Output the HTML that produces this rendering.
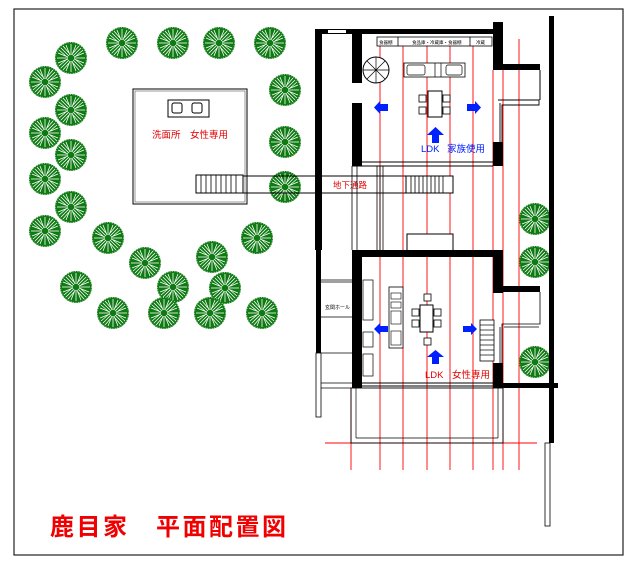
<!DOCTYPE html>
<html><head><meta charset="utf-8"><style>
html,body{margin:0;padding:0;background:#fff;}
svg{display:block;}
text{font-family:"Liberation Sans","Noto Sans CJK JP",sans-serif;}
</style></head><body>
<svg width="638" height="567" viewBox="0 0 638 567" xmlns="http://www.w3.org/2000/svg">
<defs>
<g id="tr">
<circle r="16" fill="#0e7a12"/>
<g stroke="#fff" stroke-width="0.8">
<line x1="0" y1="-3" x2="0" y2="-14"/><line x1="0" y1="3" x2="0" y2="14"/>
<line x1="-3" y1="0" x2="-14" y2="0"/><line x1="3" y1="0" x2="14" y2="0"/>
<line x1="2" y1="-2" x2="10" y2="-10"/><line x1="-2" y1="2" x2="-10" y2="10"/>
<line x1="-2" y1="-2" x2="-10" y2="-10"/><line x1="2" y1="2" x2="10" y2="10"/>
<line x1="1" y1="-3" x2="5" y2="-13"/><line x1="-1" y1="3" x2="-5" y2="13"/>
<line x1="3" y1="1" x2="13" y2="5"/><line x1="-3" y1="-1" x2="-13" y2="-5"/>
<line x1="-1" y1="-3" x2="-5" y2="-13"/><line x1="1" y1="3" x2="5" y2="13"/>
<line x1="3" y1="-1" x2="13" y2="-5"/><line x1="-3" y1="1" x2="-13" y2="5"/>
<line x1="2" y1="-5" x2="8" y2="-12"/><line x1="-2" y1="5" x2="-8" y2="12"/>
<line x1="5" y1="2" x2="12" y2="8"/><line x1="-5" y1="-2" x2="-12" y2="-8"/>
<line x1="-2" y1="-5" x2="-8" y2="-12"/><line x1="2" y1="5" x2="8" y2="12"/>
<line x1="5" y1="-2" x2="12" y2="-8"/><line x1="-5" y1="2" x2="-12" y2="8"/>
</g>
<circle r="15.5" fill="none" stroke="#fff" stroke-width="1" stroke-dasharray="0.8 1.6" opacity="0.7"/>
</g>
<g id="chair"><rect width="7" height="7" fill="#fff" stroke="#000" stroke-width="0.8"/></g>
</defs>

<rect x="14" y="9" width="609" height="546" fill="none" stroke="#222" stroke-width="1.2"/>

<g>
<use href="#tr" x="122" y="43"/><use href="#tr" x="173" y="43"/><use href="#tr" x="219" y="43"/><use href="#tr" x="270" y="43"/>
<use href="#tr" x="71" y="58"/><use href="#tr" x="45" y="82"/><use href="#tr" x="285" y="90"/>
<use href="#tr" x="71" y="110"/><use href="#tr" x="45" y="133"/><use href="#tr" x="285" y="142"/>
<use href="#tr" x="71" y="155"/><use href="#tr" x="45" y="179"/><use href="#tr" x="285" y="187"/>
<use href="#tr" x="71" y="207"/><use href="#tr" x="45" y="231"/><use href="#tr" x="108" y="238"/><use href="#tr" x="257" y="238"/>
<use href="#tr" x="145" y="263"/><use href="#tr" x="212" y="257"/><use href="#tr" x="76" y="287"/><use href="#tr" x="173" y="287"/><use href="#tr" x="225" y="288"/>
<use href="#tr" x="113" y="313"/><use href="#tr" x="164" y="313"/><use href="#tr" x="210" y="313"/><use href="#tr" x="262" y="313"/>
<use href="#tr" x="535" y="219"/><use href="#tr" x="535" y="262"/><use href="#tr" x="535" y="362"/>
</g>

<rect x="133" y="89" width="114" height="115" fill="none" stroke="#000" stroke-width="1"/>
<rect x="135" y="91" width="110" height="111" fill="none" stroke="#555" stroke-width="0.6"/>
<rect x="168" y="100" width="41" height="17" fill="none" stroke="#000"/>
<rect x="172" y="103" width="10" height="10" rx="2" fill="none" stroke="#000"/>
<rect x="192" y="103" width="10" height="10" rx="2" fill="none" stroke="#000"/>
<text x="152" y="138" font-size="9.5" fill="#e00000">洗面所　女性専用</text>
<rect x="196" y="175" width="47" height="18" fill="#fff" stroke="#000"/>
<g stroke="#000" stroke-width="0.8">
<line x1="201" y1="175" x2="201" y2="193"/><line x1="206" y1="175" x2="206" y2="193"/><line x1="211" y1="175" x2="211" y2="193"/><line x1="216" y1="175" x2="216" y2="193"/><line x1="221" y1="175" x2="221" y2="193"/><line x1="226" y1="175" x2="226" y2="193"/><line x1="231" y1="175" x2="231" y2="193"/><line x1="236" y1="175" x2="236" y2="193"/>
</g>
<line x1="243" y1="176" x2="406" y2="176" stroke="#000"/>
<line x1="243" y1="193" x2="406" y2="193" stroke="#000"/>

<g stroke="#f00" stroke-width="0.9">
<line x1="380" y1="46" x2="380" y2="470"/><line x1="403" y1="46" x2="403" y2="470"/><line x1="427" y1="46" x2="427" y2="470"/>
<line x1="450" y1="46" x2="450" y2="470"/><line x1="473" y1="46" x2="473" y2="470"/><line x1="493" y1="70" x2="493" y2="470"/>
<line x1="503" y1="70" x2="503" y2="470"/><line x1="519" y1="39" x2="519" y2="470"/><line x1="351" y1="388" x2="351" y2="470"/>
<line x1="325" y1="443" x2="537" y2="443"/>
</g>

<g fill="#000">
<rect x="315" y="29" width="7" height="221"/>
<rect x="315" y="29" width="180" height="5"/>
<rect x="493" y="22" width="10" height="48"/>
<rect x="503" y="64" width="37" height="6"/>
<rect x="352" y="34" width="10" height="49"/>
<rect x="352" y="103" width="10" height="63"/>
<rect x="493" y="142" width="10" height="24"/>
<rect x="549" y="16" width="5" height="427"/>
</g>
<rect x="328" y="30" width="18" height="3" fill="#fff"/>
<line x1="362" y1="162" x2="493" y2="162" stroke="#000"/>
<line x1="352" y1="166" x2="493" y2="166" stroke="#000"/>
<line x1="540" y1="70" x2="540" y2="100" stroke="#000"/>
<path d="M498 100 H539 V105 H502 V142 M500 103 V142" fill="none" stroke="#000" stroke-width="0.9"/>
<rect x="377" y="37" width="115" height="9" fill="#fff" stroke="#000" stroke-width="0.8"/>
<line x1="398" y1="37" x2="398" y2="46" stroke="#000" stroke-width="0.8"/>
<line x1="470" y1="37" x2="470" y2="46" stroke="#000" stroke-width="0.8"/>
<text x="379" y="44" font-size="4.5">食器棚</text>
<text x="412" y="44" font-size="4.5">食品庫・冷蔵庫・食器棚</text>
<text x="476" y="44" font-size="4.5">冷蔵</text>
<circle cx="376" cy="70" r="13" fill="#fff" stroke="#000"/>
<g stroke="#000" stroke-width="0.7"><line x1="363" y1="70" x2="389" y2="70"/><line x1="376" y1="57" x2="376" y2="83"/><line x1="367" y1="61" x2="385" y2="79"/><line x1="385" y1="61" x2="367" y2="79"/></g>
<rect x="404" y="63" width="61" height="14" fill="#fff" stroke="#000" stroke-width="0.8"/>
<rect x="407" y="65" width="18" height="10" rx="2" fill="none" stroke="#000" stroke-width="0.7"/>
<rect x="446" y="65" width="16" height="10" rx="2" fill="none" stroke="#000" stroke-width="0.7"/>
<line x1="435" y1="63" x2="435" y2="77" stroke="#000" stroke-width="0.7"/><line x1="441" y1="63" x2="441" y2="77" stroke="#000" stroke-width="0.7"/>
<rect x="428" y="91" width="14" height="26" fill="#fff" stroke="#000"/>
<use href="#chair" x="419" y="95"/><use href="#chair" x="419" y="107"/><use href="#chair" x="443" y="95"/><use href="#chair" x="443" y="107"/>
<g fill="#0020ff">
<path d="M374 107.5 L380 101 V104 H388 V111 H380 V114 Z"/>
<path d="M481 107.5 L475 101 V104 H467 V111 H475 V114 Z"/>
<path d="M435.5 127 L444 135 H439 V143 H432 V135 H427 Z"/>
</g>
<text x="421" y="152" font-size="9.5" fill="#0020ff">LDK</text>
<text x="447" y="152" font-size="9.5" fill="#0020ff">家族使用</text>
<rect x="406" y="176" width="47" height="17" fill="#fff" stroke="#000"/>
<g stroke="#000" stroke-width="0.8"><line x1="411" y1="176" x2="411" y2="193"/><line x1="415" y1="176" x2="415" y2="193"/><line x1="419" y1="176" x2="419" y2="193"/><line x1="423" y1="176" x2="423" y2="193"/><line x1="427" y1="176" x2="427" y2="193"/><line x1="431" y1="176" x2="431" y2="193"/><line x1="435" y1="176" x2="435" y2="193"/><line x1="439" y1="176" x2="439" y2="193"/><line x1="443" y1="176" x2="443" y2="193"/></g>
<text x="333" y="188" font-size="8.5" fill="#e00000">地下通路</text>
<line x1="377" y1="166" x2="377" y2="250" stroke="#000" stroke-width="0.8"/>
<line x1="380" y1="166" x2="380" y2="250" stroke="#000" stroke-width="0.8"/>
<line x1="383" y1="166" x2="383" y2="250" stroke="#000" stroke-width="0.8"/>
<line x1="352" y1="166" x2="352" y2="250" stroke="#000" stroke-width="0.8"/>
<line x1="357" y1="166" x2="357" y2="250" stroke="#000" stroke-width="0.8"/>
<rect x="407" y="234" width="46" height="17" fill="#fff" stroke="#000"/>

<g fill="#000">
<rect x="352" y="250" width="145" height="7"/>
<rect x="352" y="250" width="10" height="138"/>
<rect x="493" y="250" width="10" height="43"/>
<rect x="493" y="363" width="10" height="25"/>
<rect x="503" y="286" width="37" height="6"/>
<rect x="503" y="383" width="55" height="5"/>
<rect x="316" y="250" width="5" height="103"/>
</g>
<rect x="316" y="353" width="5" height="64" fill="#fff" stroke="#000" stroke-width="0.8"/>
<path d="M540 292 V324 H502 V363 M500 327 V363 M539 327 H504" fill="none" stroke="#000" stroke-width="0.8"/>
<line x1="321" y1="280" x2="352" y2="280" stroke="#000" stroke-width="0.8"/>
<line x1="321" y1="282" x2="352" y2="282" stroke="#000" stroke-width="0.8"/>
<line x1="321" y1="317" x2="352" y2="317" stroke="#000" stroke-width="0.8"/>
<line x1="321" y1="353" x2="352" y2="353" stroke="#000" stroke-width="0.8"/>
<line x1="321" y1="383" x2="352" y2="383" stroke="#000" stroke-width="0.8"/>
<line x1="321" y1="388" x2="352" y2="388" stroke="#000" stroke-width="0.8"/>
<text x="325" y="309" font-size="5">玄関ホール</text>
<rect x="363" y="280" width="10" height="40" fill="#fff" stroke="#000" stroke-width="0.7"/>
<rect x="363" y="332" width="10" height="15" fill="#fff" stroke="#000" stroke-width="0.7"/>
<rect x="363" y="354" width="10" height="22" fill="#fff" stroke="#000" stroke-width="0.7"/>
<rect x="389" y="287" width="14" height="61" fill="#fff" stroke="#000" stroke-width="0.8"/>
<rect x="391" y="293" width="10" height="6" fill="none" stroke="#000" stroke-width="0.6"/>
<rect x="391" y="302" width="10" height="6" fill="none" stroke="#000" stroke-width="0.6"/>
<rect x="391" y="311" width="10" height="13" fill="none" stroke="#000" stroke-width="0.6"/>
<rect x="391" y="331" width="10" height="14" fill="none" stroke="#000" stroke-width="0.6"/>
<rect x="420" y="305" width="13" height="27" fill="#fff" stroke="#000"/>
<use href="#chair" x="424" y="294"/><use href="#chair" x="424" y="338"/>
<use href="#chair" x="412" y="309"/><use href="#chair" x="412" y="320"/><use href="#chair" x="434" y="309"/><use href="#chair" x="434" y="320"/>
<g fill="#0020ff">
<path d="M374 329 L380 323 V326 H388 V332 H380 V335 Z"/>
<path d="M477 329 L471 323 V326 H463 V332 H471 V335 Z"/>
<path d="M435.5 350 L444 357 H439 V364 H432 V357 H427 Z"/>
</g>
<text x="425" y="378" font-size="9.5" fill="#e00000">LDK</text>
<text x="452" y="378" font-size="9.5" fill="#e00000">女性専用</text>
<rect x="480" y="320" width="14" height="41" fill="#fff" stroke="#000" stroke-width="0.8"/>
<g stroke="#000" stroke-width="0.7"><line x1="480" y1="325" x2="494" y2="325"/><line x1="480" y1="330" x2="494" y2="330"/><line x1="480" y1="335" x2="494" y2="335"/><line x1="480" y1="340" x2="494" y2="340"/><line x1="480" y1="345" x2="494" y2="345"/><line x1="480" y1="350" x2="494" y2="350"/><line x1="480" y1="355" x2="494" y2="355"/></g>
<line x1="362" y1="383" x2="493" y2="383" stroke="#000"/>
<line x1="362" y1="386" x2="493" y2="386" stroke="#000"/>
<rect x="351" y="388" width="152" height="55" fill="none" stroke="#000" stroke-width="0.9"/>
<line x1="356" y1="388" x2="356" y2="438" stroke="#000" stroke-width="0.7"/>
<line x1="498" y1="388" x2="498" y2="438" stroke="#000" stroke-width="0.7"/>
<line x1="356" y1="438" x2="498" y2="438" stroke="#000" stroke-width="0.7"/>
<rect x="545" y="443" width="5" height="83" fill="#fff" stroke="#000" stroke-width="0.8"/>

<text x="50" y="535" font-size="24" font-weight="bold" letter-spacing="2.5" fill="#f00000">鹿目家　平面配置図</text>
</svg>
</body></html>
